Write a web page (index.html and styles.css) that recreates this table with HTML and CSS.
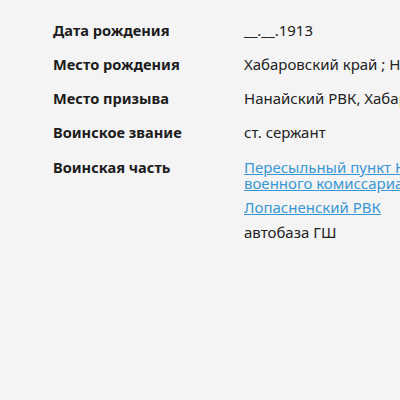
FILE: index.html
```html
<!DOCTYPE html>
<html lang="ru">
<head>
<meta charset="utf-8">
<link rel="stylesheet" href="styles.css">
</head>
<body>
<div class="card">
  <div class="row">
    <div class="label">Дата рождения</div>
    <div class="value">__.__.1913</div>
  </div>
  <div class="row">
    <div class="label">Место рождения</div>
    <div class="value">Хабаровский край ; Нанайский район</div>
  </div>
  <div class="row">
    <div class="label">Место призыва</div>
    <div class="value">Нанайский РВК, Хабаровский край</div>
  </div>
  <div class="row">
    <div class="label">Воинское звание</div>
    <div class="value">ст. сержант</div>
  </div>
  <div class="row">
    <div class="label">Воинская часть</div>
    <div class="value">
      <a class="link item" href="#">Пересыльный пункт Нанайского районного<br>военного комиссариата</a>
      <a class="link item" href="#">Лопасненский РВК</a>
      <div class="item">автобаза ГШ</div>
    </div>
  </div>
</div>
</body>
</html>
```
FILE: styles.css
```css
html, body {
  margin: 0;
  padding: 0;
  background: #f4f4f4;
  overflow: hidden;
}
body {
  width: 400px;
  height: 400px;
  font-family: "Noto Sans", "DejaVu Sans", sans-serif;
  font-size: 15px;
  line-height: 16px;
  color: #222;
}
.card {
  padding: 21.5px 0 0 53px;
  display: flex;
  flex-direction: column;
  gap: 18.3px;
}
.row {
  display: grid;
  grid-template-columns: 191px 1fr;
}
.label {
  font-weight: bold;
  font-size: 14.6px;
  color: #1c1c1c;
  white-space: nowrap;
}
.value {
  display: flex;
  flex-direction: column;
  gap: 8.5px;
  min-width: 0;
  white-space: nowrap;
}
.item {
  display: block;
}
.link {
  color: #3a97d4;
  text-decoration: underline;
}
```
